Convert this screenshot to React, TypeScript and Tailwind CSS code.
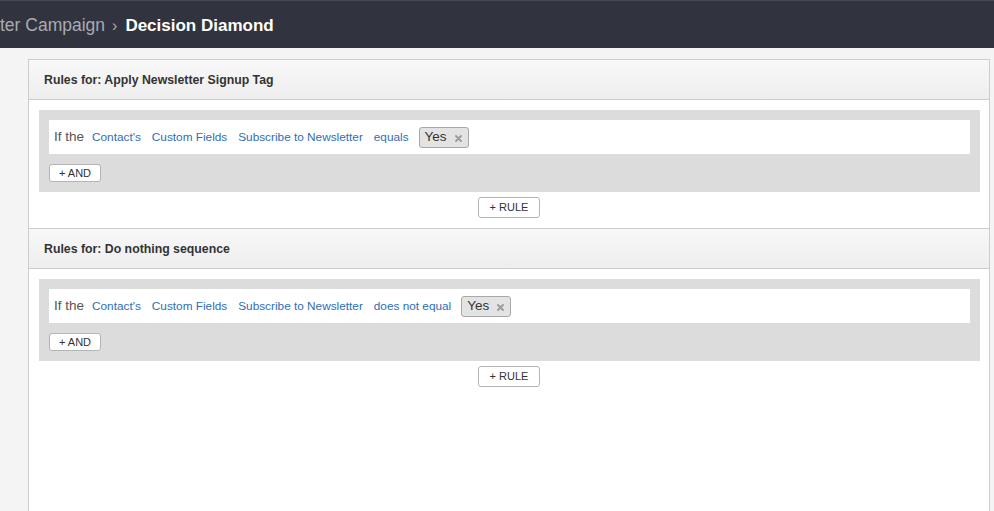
const FONT = { fontFamily: '"Liberation Sans", Arial, sans-serif' };

interface Rule {
  operator: string;
}

interface Section {
  title: string;
  rules: Rule[];
}

const sections: Section[] = [
  { title: "Rules for: Apply Newsletter Signup Tag", rules: [{ operator: "equals" }] },
  { title: "Rules for: Do nothing sequence", rules: [{ operator: "does not equal" }] },
];

function ValueChip({ label }: { label: string }) {
  return (
    <span className="ml-[10px] flex h-[21px] items-center gap-[8px] rounded-[3px] border border-[#a8a8a8] bg-[#e3e3e3] pl-[5px] pr-[6px] text-[13.5px] text-[#333]">
      {label}
      <svg width="7" height="7" viewBox="0 0 7 7" className="mt-[1px]">
        <path d="M1 1L6 6M6 1L1 6" stroke="#9a9a9a" strokeWidth="1.8" strokeLinecap="round" />
      </svg>
    </span>
  );
}

function SmallButton({ label, className }: { label: string; className?: string }) {
  return (
    <button
      type="button"
      className={
        "flex items-center justify-center rounded-[3px] border border-[#b4b4b4] bg-white text-[11px] text-[#333] " +
        (className ?? "")
      }
    >
      {label}
    </button>
  );
}

function RuleRow({ rule }: { rule: Rule }) {
  return (
    <div className="flex h-[34px] items-center bg-white pl-[5px] pt-[1px]">
      <span className="mr-[8px] text-[13.5px] text-[#555]">If the</span>
      <div className="flex items-center gap-[11px] text-[11.8px] text-[#2f6db5]">
        <span>Contact's</span>
        <span>Custom Fields</span>
        <span>Subscribe to Newsletter</span>
        <span>{rule.operator}</span>
      </div>
      <ValueChip label="Yes" />
    </div>
  );
}

function RuleSection({ section, first }: { section: Section; first: boolean }) {
  return (
    <div className={first ? "" : "border-t border-[#cdcdcd]"}>
      <div className="flex h-[40px] items-center border-b border-[#cdcdcd] bg-gradient-to-b from-[#f8f8f8] to-[#eeeeee] pl-[15px] pt-[2px] text-[12.3px] font-bold text-[#333]">
        {section.title}
      </div>
      <div className="pt-[10px] pb-[10px]">
        <div className="mx-[10px] mr-[9px] bg-[#dcdcdc] p-[10px]">
          {section.rules.map((r, i) => (
            <RuleRow key={i} rule={r} />
          ))}
          <SmallButton label="+ AND" className="mt-[10px] h-[18px] w-[52px]" />
        </div>
        <SmallButton label="+ RULE" className="mx-auto mt-[5px] h-[21px] w-[62px]" />
      </div>
    </div>
  );
}

export default function App() {
  return (
    <div className="flex h-[511px] w-[994px] flex-col overflow-hidden bg-[#f4f4f4]" style={FONT}>
      <div className="flex h-[48px] shrink-0 items-center border-t border-[#474a55] bg-[#31343f] pt-[2px]">
        <span className="text-[17.5px] text-[#a9abb1]">ter Campaign</span>
        <span className="ml-[7px] mr-[8px] text-[16px] text-[#a9abb1]">›</span>
        <span className="text-[17px] font-bold text-white">Decision Diamond</span>
      </div>
      <div className="flex flex-1 flex-col pt-[11px] pl-[28px] pr-[4px]">
        <div className="flex-1 border-x border-t border-[#cdcdcd] bg-white">
          {sections.map((s, i) => (
            <RuleSection key={s.title} section={s} first={i === 0} />
          ))}
        </div>
      </div>
    </div>
  );
}
